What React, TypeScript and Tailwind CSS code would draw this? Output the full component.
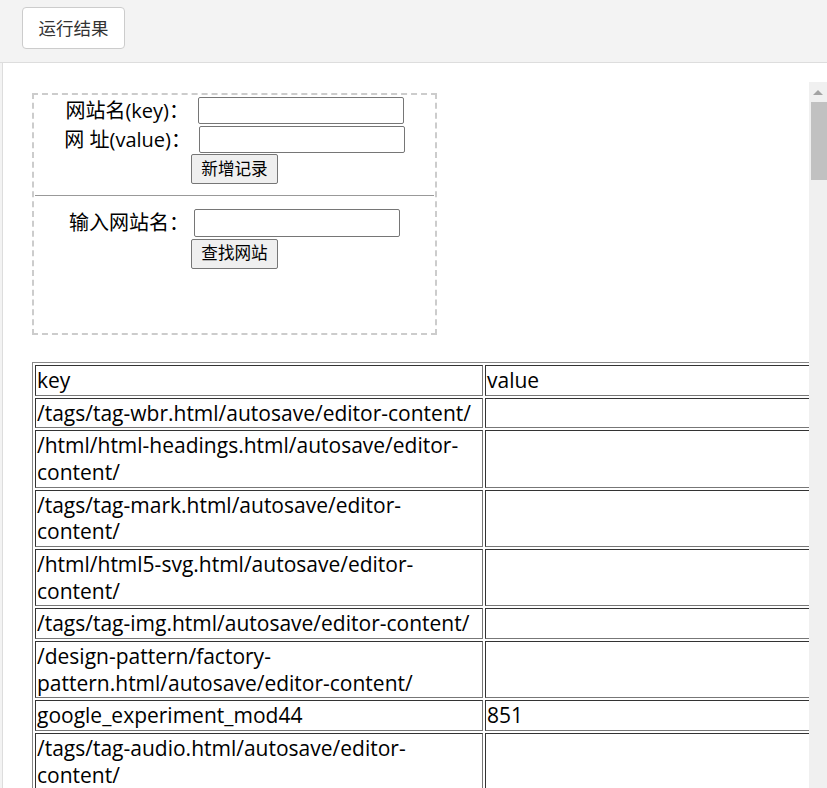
const rows: { key: string[]; value: string }[] = [
  { key: ["/tags/tag-wbr.html/autosave/editor-content/"], value: "" },
  { key: ["/html/html-headings.html/autosave/editor-", "content/"], value: "" },
  { key: ["/tags/tag-mark.html/autosave/editor-", "content/"], value: "" },
  { key: ["/html/html5-svg.html/autosave/editor-", "content/"], value: "" },
  { key: ["/tags/tag-img.html/autosave/editor-content/"], value: "" },
  { key: ["/design-pattern/factory-", "pattern.html/autosave/editor-content/"], value: "" },
  { key: ["google_experiment_mod44"], value: "851" },
  { key: ["/tags/tag-audio.html/autosave/editor-", "content/"], value: "" },
  { key: ["/tags/tag-video.html/autosave/editor-", "content/"], value: "" },
];

const font = "font-['Microsoft_YaHei','Open_Sans','Noto_Sans_CJK_SC',sans-serif]";

function Cell({ children, w }: { children?: React.ReactNode; w?: string }) {
  return (
    <td
      className={`${w ?? ""} border border-t-[#333] border-l-[#333] border-r-[#777] border-b-[#777] p-px align-top`}
    >
      {children}
    </td>
  );
}

export default function App() {
  return (
    <div className={`flex h-[788px] w-[827px] flex-col overflow-hidden bg-[#f3f3f3] ${font}`}>
      <div className="h-[63px] shrink-0 border-b border-[#ddd] pl-[22px] pt-[7px]">
        <button
          type="button"
          className="h-[42px] w-[103px] rounded-[4px] border border-[#ccc] bg-white text-[17.5px] text-[#333]"
        >
          运行结果
        </button>
      </div>
      <div className="flex min-h-0 flex-1 pl-[2px]">
        <div className="flex min-w-0 flex-1 border-l border-[#ddd] bg-white pt-[19px]">
          <div className="min-w-0 flex-1 overflow-hidden pl-[29px] pt-[11px] text-[20px] text-black">
            <div className="h-[242px] w-[405px] border-2 border-dashed border-[#ccc]">
              <div className="flex h-[29px] items-end">
                <span className="flex h-[27px] w-[164px] items-center justify-end pr-[9px] whitespace-nowrap">
                  网站名(key)：
                </span>
                <input className="h-[27px] w-[206px] rounded-[2px] border border-[#767676] bg-white" />
              </div>
              <div className="flex h-[29px] items-end">
                <span className="flex h-[27px] w-[165px] items-center justify-end pr-[8px] whitespace-nowrap">
                  网 址(value)：
                </span>
                <input className="h-[27px] w-[206px] rounded-[2px] border border-[#767676] bg-white" />
              </div>
              <div className="pl-[157px]">
                <button className="h-[30px] w-[87px] rounded-[2px] border border-[#767676] bg-[#efefef] text-[16.6px]">
                  新增记录
                </button>
              </div>
              <hr className="mx-px mt-[11px] border-t border-[#999]" />
              <div className="mt-[13px] flex h-[28px] items-center">
                <span className="w-[160px] pr-[5px] text-right whitespace-nowrap">输入网站名：</span>
                <input className="h-[28px] w-[206px] rounded-[2px] border border-[#767676] bg-white" />
              </div>
              <div className="pl-[157px]">
                <button className="h-[30px] w-[87px] rounded-[2px] border border-[#767676] bg-[#efefef] text-[16.6px]">
                  查找网站
                </button>
              </div>
            </div>
            <table className="mt-[27px] w-[900px] table-fixed border-separate border-spacing-[2px] border border-t-[#888] border-l-[#888] border-r-[#333] border-b-[#333] text-[21px] leading-[26.67px]">
              <tbody>
                <tr>
                  <Cell w="w-[448px]">key</Cell>
                  <Cell>value</Cell>
                </tr>
                {rows.map((r, i) => (
                  <tr key={i}>
                    <Cell>
                      {r.key.map((l, j) => (
                        <div key={j} className="whitespace-nowrap">
                          {l}
                        </div>
                      ))}
                    </Cell>
                    <Cell>{r.value}</Cell>
                  </tr>
                ))}
              </tbody>
            </table>
          </div>
          <div className="flex w-[18px] shrink-0 flex-col bg-[#f0f0f0]">
            <div className="flex h-[20px] items-center justify-center">
              <div className="h-0 w-0 border-x-[5px] border-b-[5px] border-x-transparent border-b-[#a3a3a3]" />
            </div>
            <div className="ml-[2px] h-[78px] bg-[#c1c1c1]" />
          </div>
        </div>
      </div>
    </div>
  );
}
